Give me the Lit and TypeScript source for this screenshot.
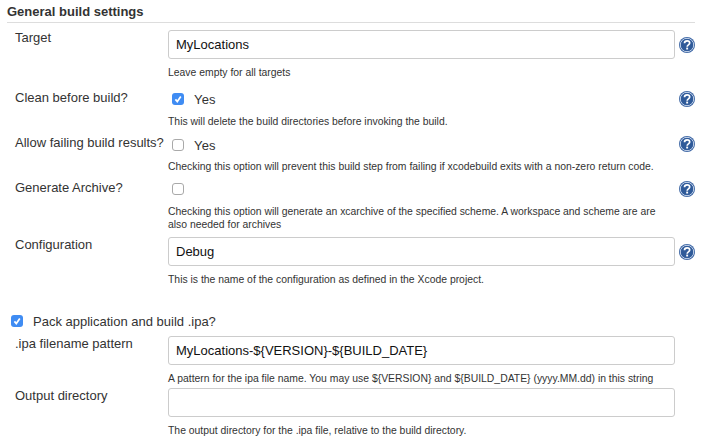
import { LitElement, html, css, svg } from "lit";
import { customElement } from "lit/decorators.js";

const helpIcon = (cls: string) => html`<svg class="help ${cls}" viewBox="0 0 16 16" width="16" height="16">
  <circle cx="8" cy="8" r="8" fill="#3a64a3"/>
  <circle cx="8" cy="8" r="6.7" fill="none" stroke="#d5e0f0" stroke-width="0.9"/>
  <circle cx="8" cy="8" r="6" fill="#2f5a99"/>
  <path d="M5.5 6.2c0-1.6 1.2-2.4 2.6-2.4s2.6.9 2.6 2.2c0 1.9-2.5 1.8-2.5 3.7" fill="none" stroke="#fff" stroke-width="1.7"/>
  <rect x="7.2" y="10.6" width="1.9" height="1.9" fill="#fff"/>
</svg>`;

const check = svg`<path d="M3.4 6.4 5.3 8.6 8.8 3.6" fill="none" stroke="#fff" stroke-width="1.7"/>`;

@customElement("app-root")
export class AppRoot extends LitElement {
  static styles = css`
    :host {
      display: block;
      width: 714px;
      height: 447px;
      overflow: hidden;
      background: #fff;
      color: #333;
      font-family: "Liberation Sans", Arial, sans-serif;
      font-size: 13px;
    }
    .title {
      margin: 0 19px 0 7px;
      height: 23px;
      box-sizing: border-box;
      padding-top: 4px;
      font-size: 13px;
      line-height: 16px;
      font-weight: bold;
      border-bottom: 1px solid #ddd;
    }
    .form {
      display: grid;
      grid-template-columns: 153px 507px 20px;
      padding-left: 15px;
      align-items: start;
      margin-top: 7px;
    }
    .label {
      line-height: 16px;
      white-space: nowrap;
    }
    .input {
      box-sizing: border-box;
      height: 29px;
      border: 1px solid #ccc;
      border-radius: 3px;
      padding: 0 7px;
      display: flex;
      align-items: center;
      font-size: 13px;
      color: #111;
    }
    .help {
      display: block;
      margin-left: 4px;
    }
    .help.row { margin-top: 1px; }
    .help.field { margin-top: 7px; }
    .desc {
      grid-column: 2 / 4;
      font-size: 10.4px;
      line-height: 13px;
      color: #333;
    }
    .chk {
      box-sizing: border-box;
      width: 12px;
      height: 12px;
      border-radius: 3px;
      border: 1px solid #a9a9a9;
      background: #fff;
      flex: none;
    }
    .chk.on {
      border: none;
      background: #3f8cf3;
    }
    .chk svg {
      display: block;
    }
    .yes {
      display: flex;
      align-items: center;
      gap: 10px;
      height: 14px;
      margin-top: 2px;
      padding-left: 4px;
      letter-spacing: 0.2px;
    }
    .yes.low { margin-top: 3px; }
    .pack {
      grid-column: 1 / 4;
      display: flex;
      align-items: center;
      gap: 10px;
      margin-left: -4px;
      height: 14px;
      margin-bottom: 8px;
    }
    .d1 { margin-top: 7px; margin-bottom: 11px; }
    .d2 { margin-top: 8px; margin-bottom: 7px; }
    .d3 { margin-top: 8px; margin-bottom: 6px; }
    .d4 { margin-top: 7px; margin-bottom: 28px; }
    .d5 { margin-top: 7px; margin-bottom: 3px; }
    .d6 { margin-top: 7px; }
  `;

  private chk(on: boolean) {
    return html`<span class="chk ${on ? "on" : ""}">
      ${on ? html`<svg viewBox="0 0 12 12" width="12" height="12">${check}</svg>` : ""}
    </span>`;
  }

  render() {
    return html`
      <div class="title">General build settings</div>
      <div class="form">
        <div class="label">Target</div>
        <div class="input">MyLocations</div>
        ${helpIcon("field")}
        <div class="desc d1">Leave empty for all targets</div>

        <div class="label">Clean before build?</div>
        <div class="yes">${this.chk(true)}<span>Yes</span></div>
        ${helpIcon("row")}
        <div class="desc d2">This will delete the build directories before invoking the build.</div>

        <div class="label">Allow failing build results?</div>
        <div class="yes low">${this.chk(false)}<span>Yes</span></div>
        ${helpIcon("row")}
        <div class="desc d2">Checking this option will prevent this build step from failing if xcodebuild exits with a non-zero return code.</div>

        <div class="label">Generate Archive?</div>
        <div class="yes">${this.chk(false)}</div>
        ${helpIcon("row")}
        <div class="desc d3">Checking this option will generate an xcarchive of the specified scheme. A workspace and scheme are are<br />also needed for archives</div>

        <div class="label">Configuration</div>
        <div class="input">Debug</div>
        ${helpIcon("field")}
        <div class="desc d4">This is the name of the configuration as defined in the Xcode project.</div>

        <div class="pack">${this.chk(true)}<span>Pack application and build .ipa?</span></div>

        <div class="label">.ipa filename pattern</div>
        <div class="input">MyLocations-\${VERSION}-\${BUILD_DATE}</div>
        <div></div>
        <div class="desc d5">A pattern for the ipa file name. You may use \${VERSION} and \${BUILD_DATE} (yyyy.MM.dd) in this string</div>

        <div class="label">Output directory</div>
        <div class="input"></div>
        <div></div>
        <div class="desc d6">The output directory for the .ipa file, relative to the build directory.</div>
      </div>
    `;
  }
}
